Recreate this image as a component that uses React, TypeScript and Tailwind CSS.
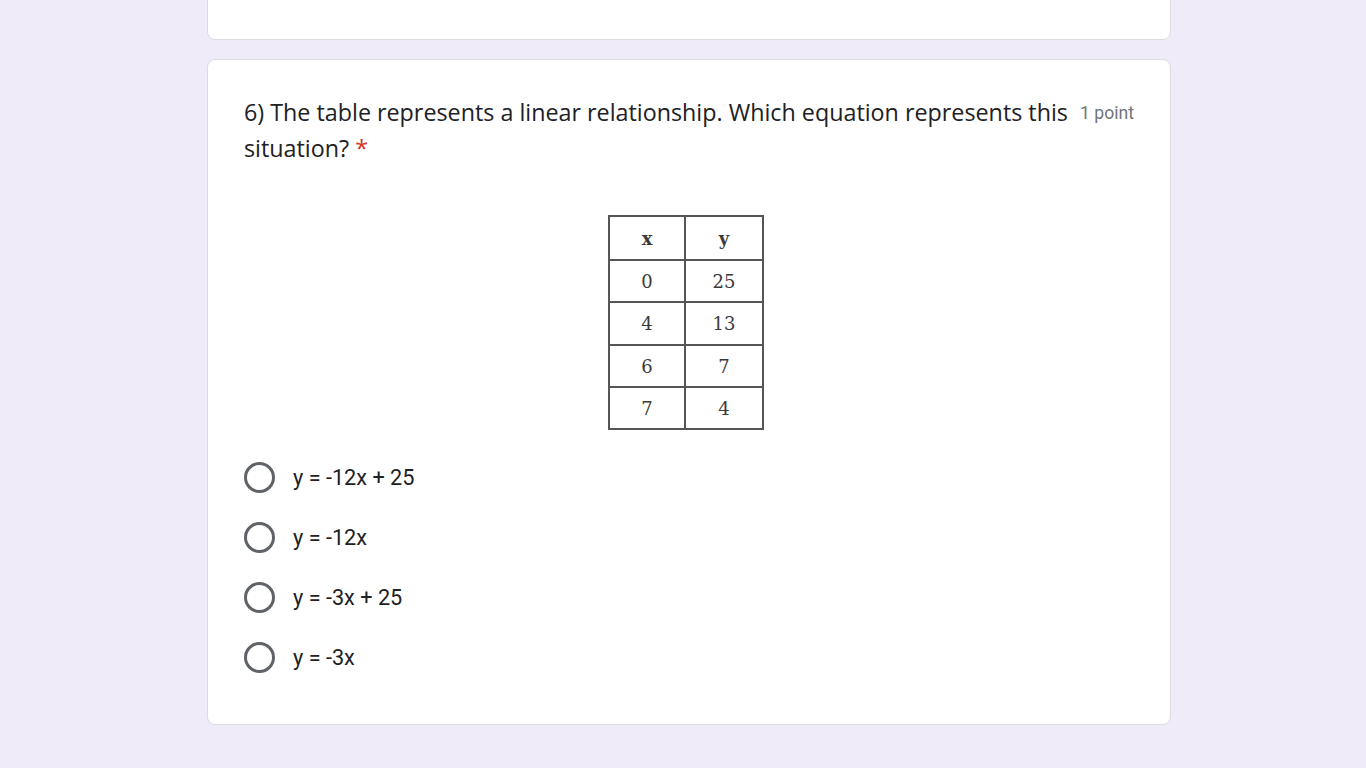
import React from 'react';

const rows: [string, string][] = [
  ['0', '25'],
  ['4', '13'],
  ['6', '7'],
  ['7', '4'],
];

const options = ['y = -12x + 25', 'y = -12x', 'y = -3x + 25', 'y = -3x'];

function Radio() {
  return <span className="block h-[31px] w-[31px] shrink-0 rounded-full border-[3px] border-[#5f6368]" />;
}

export default function App() {
  return (
    <div className="min-h-[768px] bg-[#f0ebf8] font-['Roboto',sans-serif]">
      <div className="ml-[207px] flex w-[964px] flex-col gap-[19px]">
        <div className="-mt-[21px] h-[61px] rounded-lg border border-[#dadce0] bg-white" />

        <div className="rounded-lg border border-[#dadce0] bg-white px-[36px] pb-[51px] pt-[34px]">
          <div className="flex items-start justify-between gap-3">
            <h2 className="font-['Open_Sans',sans-serif] text-[23.3px] leading-[36px] text-[#202124]">
              6) The table represents a linear relationship. Which equation represents this situation?{' '}
              <span className="text-[#d93025]">*</span>
            </h2>
            <span className="shrink-0 whitespace-nowrap pt-[7px] text-[17.6px] leading-[24px] text-[#70757a]">1 point</span>
          </div>

          <div className="mt-[49px] flex justify-center pr-[6px]">
            <table className="border-collapse font-['DejaVu_Serif',serif] text-[18px] text-[#3a3a3a]">
              <thead>
                <tr className="h-[44px]">
                  <th className="w-[76px] border-2 border-[#555] font-bold">x</th>
                  <th className="w-[78px] border-2 border-[#555] font-bold">y</th>
                </tr>
              </thead>
              <tbody>
                {rows.map(([x, y], i) => (
                  <tr key={x} className={i === 1 ? 'h-[43px]' : 'h-[42px]'}>
                    <td className="border-2 border-[#555] text-center">{x}</td>
                    <td className="border-2 border-[#555] text-center">{y}</td>
                  </tr>
                ))}
              </tbody>
            </table>
          </div>

          <div className="mt-[32px] flex flex-col gap-[29px]">
            {options.map((o) => (
              <label key={o} className="flex items-center gap-[18px]">
                <Radio />
                <span className="text-[21.7px] leading-[31px] text-[#202124]">{o}</span>
              </label>
            ))}
          </div>
        </div>
      </div>
    </div>
  );
}
